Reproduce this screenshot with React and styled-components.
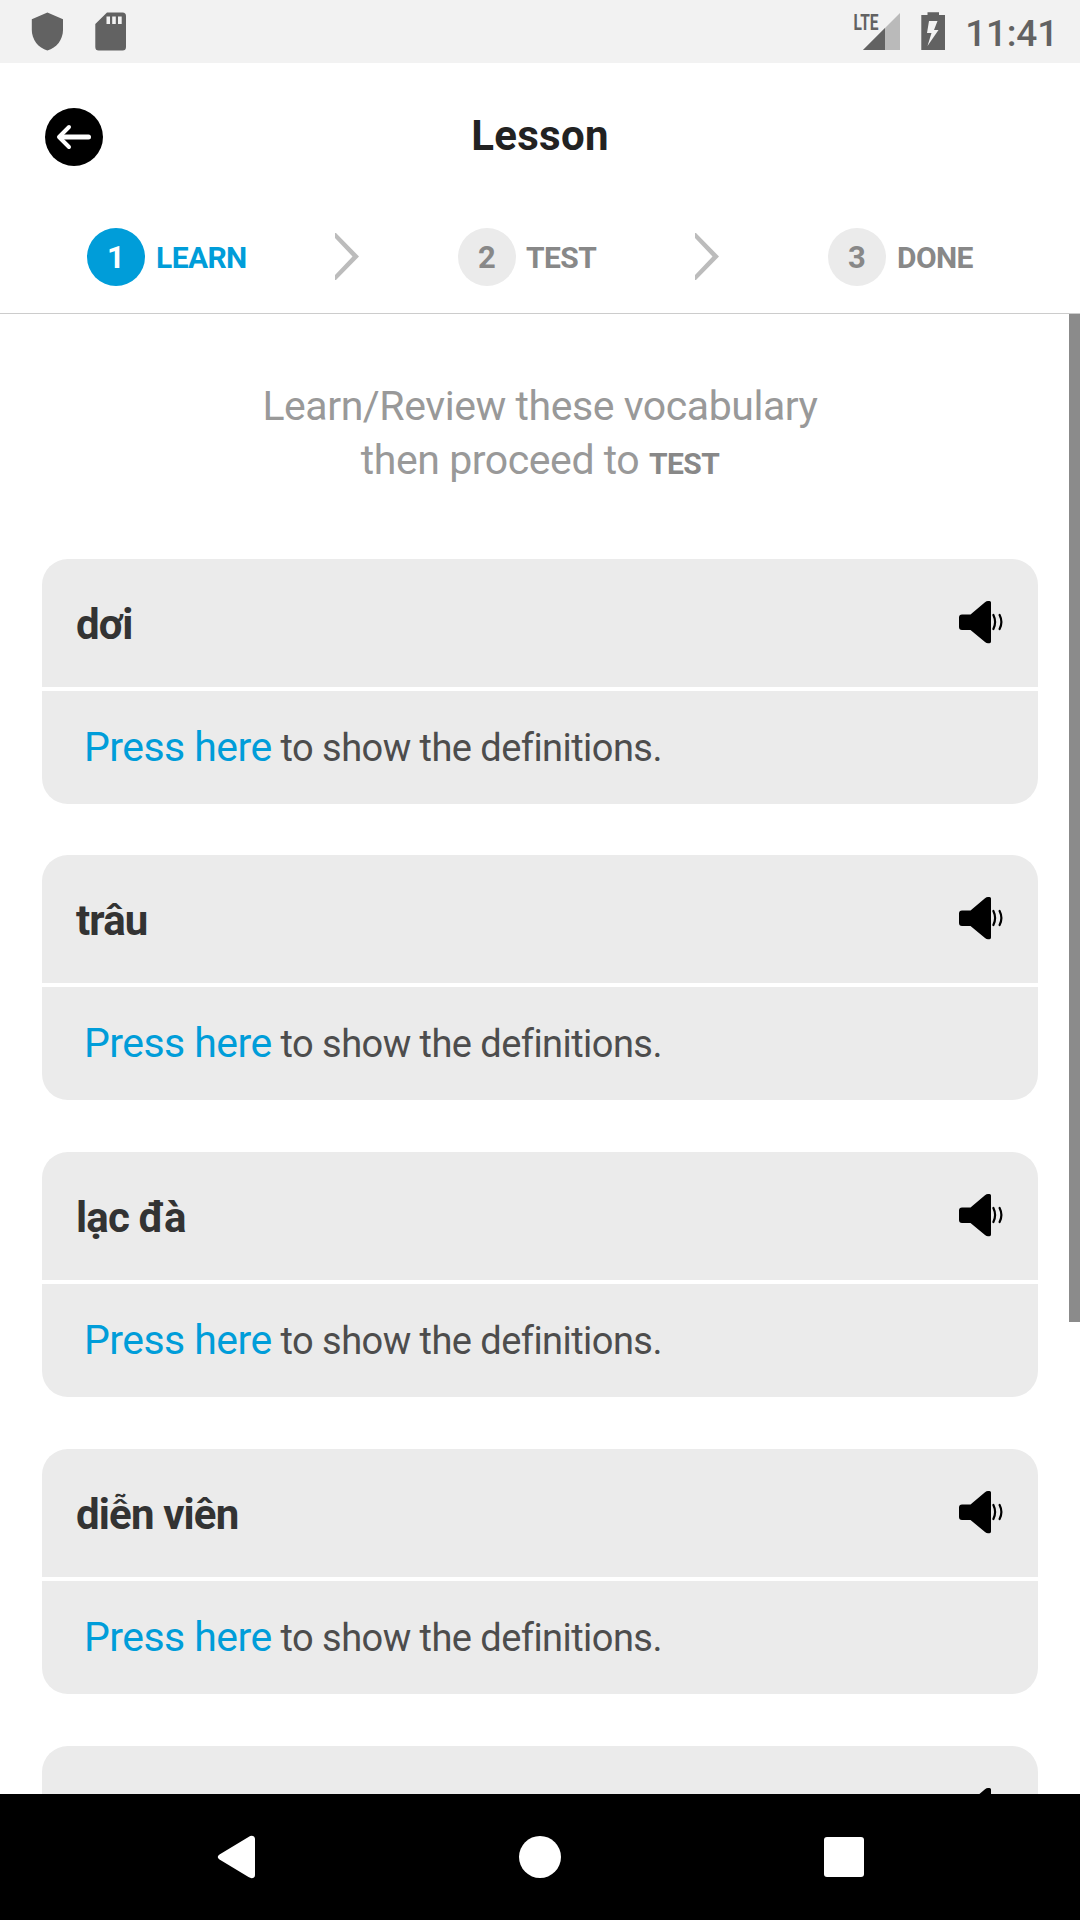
import React from "react";
import styled, { createGlobalStyle } from "styled-components";

const Global = createGlobalStyle`
  * { box-sizing: border-box; }
  body { margin: 0; background: #fff; }
`;

const Screen = styled.div`
  width: 1080px;
  height: 1920px;
  display: flex;
  flex-direction: column;
  overflow: hidden;
  background: #fff;
  font-family: Roboto, "Noto Sans", sans-serif;
`;

const StatusBar = styled.div`
  height: 63px;
  flex: none;
  display: flex;
  align-items: flex-start;
  justify-content: space-between;
  padding: 12px 22px 0 31px;
  background: #f2f2f2;
  color: #626262;
`;

const StatusGroup = styled.div`
  display: flex;
  gap: ${(p) => p.$gap}px;
`;

const Signal = styled.svg`
  overflow: visible;
`;

const Clock = styled.span`
  margin-left: -2px;
  font-size: 37px;
  line-height: 44px;
  font-weight: 500;
  letter-spacing: -0.2px;
`;

const Header = styled.header`
  height: 145px;
  flex: none;
  display: grid;
  grid-template-columns: 58px 1fr 58px;
  align-items: center;
  padding: 3px 45px 0;
`;

const BackButton = styled.button`
  width: 58px;
  height: 58px;
  padding: 0;
  border: 0;
  border-radius: 50%;
  background: #000;
  display: flex;
`;

const Title = styled.h1`
  margin: -2px 0 0;
  text-align: center;
  color: #222;
  font-size: 42px;
  line-height: 50px;
  font-weight: 700;
  letter-spacing: 0.3px;
`;

const Steps = styled.nav`
  height: 106px;
  flex: none;
  display: flex;
  align-items: flex-start;
  padding: 20px 0 0 87px;
  border-bottom: 1px solid #ccc;
`;

const Step = styled.div`
  width: ${(p) => p.$width}px;
  display: flex;
  align-items: center;
  gap: ${(p) => p.$gap || 11}px;
  color: ${(p) => (p.$active ? "#009dd9" : "#888")};
`;

const StepNumber = styled.span`
  width: 58px;
  height: 58px;
  flex: none;
  border-radius: 50%;
  display: flex;
  align-items: center;
  justify-content: center;
  padding-top: 1px;
  font-size: 31px;
  font-weight: 700;
  background: ${(p) => (p.$active ? "#009dd9" : "#ebebeb")};
  color: ${(p) => (p.$active ? "#fff" : "#888")};
`;

const StepLabel = styled.span`
  padding-top: 2px;
  font-size: 30px;
  line-height: 36px;
  font-weight: 700;
  letter-spacing: -0.6px;
`;

const Chevron = styled.svg`
  width: 24px;
  height: 47px;
  flex: none;
  margin: 5px ${(p) => p.$after}px 0 0;
`;

const Scroller = styled.main`
  flex: 1;
  min-height: 0;
  display: flex;
  align-items: flex-start;
  overflow: hidden;
`;

const Content = styled.div`
  width: 1069px;
  padding: 65px 31px 0 42px;
`;

const ScrollThumb = styled.div`
  width: 11px;
  height: 1008px;
  background: #8b8b8b;
`;

const Intro = styled.p`
  margin: 0 0 71.6px;
  text-align: center;
  color: #999;
  font-size: 41px;
  line-height: 54px;
  letter-spacing: -0.44px;
`;

const IntroStrong = styled.strong`
  font-size: 30px;
  line-height: 1;
  letter-spacing: -0.6px;
  color: #888;
`;

const CardList = styled.div`
  display: flex;
  flex-direction: column;
  gap: 51.75px;
`;

const Card = styled.article`
  height: 245px;
  display: flex;
  flex-direction: column;
  gap: 4px;
`;

const CardTop = styled.div`
  height: 128px;
  flex: none;
  display: flex;
  align-items: center;
  justify-content: space-between;
  padding: 3px 34px 0;
  border-radius: 26px 26px 0 0;
  background: #ebebeb;
`;

const Word = styled.h2`
  margin: 0;
  color: #333;
  font-size: 42px;
  line-height: 49px;
  font-weight: 700;
  letter-spacing: -0.85px;
`;

const Sound = styled.svg`
  width: 45px;
  height: 44px;
  margin-top: -5px;
`;

const CardBottom = styled.div`
  flex: 1;
  padding: 31px 42px 0;
  border-radius: 0 0 26px 26px;
  background: #ebebeb;
  color: #4d4d4d;
  font-size: 38px;
  line-height: 50px;
  letter-spacing: -0.55px;
  white-space: nowrap;
`;

const Press = styled.span`
  color: #009dd9;
  font-size: 41px;
`;

const NavBar = styled.footer`
  height: 126px;
  flex: none;
  display: flex;
  align-items: center;
  padding: 0 216px 0 217px;
  justify-content: space-between;
  background: #000;
`;

const words = ["dơi", "trâu", "lạc đà", "diễn viên", ""];

function Speaker() {
  return (
    <Sound viewBox="0 0 45 44">
      <path d="M3 14.5H11.5L26 2.3Q27.5 1 29 1H30.5Q32 1 32 2.5V41.5Q32 43.3 30.5 43.3H29Q27.5 43.3 26 42L11.5 30H3Q0 30 0 27V17.5Q0 14.5 3 14.5Z" />
      <path d="M34.4 15Q37.8 22 34.4 29M40.6 15Q44.2 22 40.6 29" fill="none" stroke="#000" strokeWidth="2.2" strokeLinecap="round" />
    </Sound>
  );
}

export default function App() {
  return (
    <Screen>
      <Global />
      <StatusBar>
        <StatusGroup $gap={31}>
          <svg width="33" height="39" viewBox="0 0 33 39">
            <path fill="#626262" d="M16.4 .5 32 7.3V18C32 27.5 25.5 36 16.4 38.5 7.3 36 .8 27.5 .8 18V7.3Z" />
          </svg>
          <svg width="32" height="39" viewBox="0 0 32 39">
            <path fillRule="evenodd" fill="#626262" d="M12 .5H27.5Q31 .5 31 4V35Q31 38.5 27.5 38.5H3.7Q.3 38.5 .3 35V12ZM11.5 4.5V12H15V4.5ZM17.2 4.5V12H20.8V4.5ZM23 4.5V12H26.7V4.5Z" />
          </svg>
        </StatusGroup>
        <StatusGroup $gap={21}>
          <Signal width="48" height="39" viewBox="0 0 48 39">
            <path fill="#bababa" d="M11 38 48 1V38Z" />
            <path fill="#626262" d="M11 38 33 16V38Z" />
            <text x="1.5" y="18" fontSize="22.5" fontWeight="700" fill="#626262" textLength="25" lengthAdjust="spacingAndGlyphs">LTE</text>
          </Signal>
          <svg width="25" height="39" viewBox="0 0 25 39">
            <path fillRule="evenodd" fill="#626262" d="M6.5 .3H18V3H24V38H.3V3H6.5ZM8 9 6 21H10.5L6.5 34 17.5 18H13L16.5 9Z" />
          </svg>
          <Clock>11:41</Clock>
        </StatusGroup>
      </StatusBar>
      <Header>
        <BackButton aria-label="Back">
          <svg width="58" height="58" viewBox="0 0 58 58" fill="none" stroke="#fff" strokeLinecap="round" strokeLinejoin="round">
            <path strokeWidth="5" d="M16 29H43.5" />
            <path strokeWidth="4" d="M24 19 14 29 24 39" />
          </svg>
        </BackButton>
        <Title>Lesson</Title>
      </Header>
      <Steps>
        <Step $width={248} $active>
          <StepNumber $active>1</StepNumber>
          <StepLabel>LEARN</StepLabel>
        </Step>
        <Chevron $after={99} viewBox="0 0 24 47">
          <path d="M1 0 24 23.5 1 47H0V42L17.5 23.5 0 5V0Z" fill="#bcbcbc" />
        </Chevron>
        <Step $width={237} $gap={10}>
          <StepNumber>2</StepNumber>
          <StepLabel>TEST</StepLabel>
        </Step>
        <Chevron $after={109} viewBox="0 0 24 47">
          <path d="M1 0 24 23.5 1 47H0V42L17.5 23.5 0 5V0Z" fill="#bcbcbc" />
        </Chevron>
        <Step $width={200}>
          <StepNumber>3</StepNumber>
          <StepLabel>DONE</StepLabel>
        </Step>
      </Steps>
      <Scroller>
        <Content>
          <Intro>
            Learn/Review these vocabulary
            <br />
            then proceed to <IntroStrong>TEST</IntroStrong>
          </Intro>
          <CardList>
            {words.map((word, i) => (
              <Card key={i}>
                <CardTop>
                  <Word>{word}</Word>
                  <Speaker />
                </CardTop>
                {word && (
                  <CardBottom>
                    <Press>Press here</Press> to show the definitions.
                  </CardBottom>
                )}
              </Card>
            ))}
          </CardList>
        </Content>
        <ScrollThumb />
      </Scroller>
      <NavBar>
        <svg width="38" height="44" viewBox="0 0 38 44">
          <path fill="#fff" d="M31.5 2Q34.5 0 37 1.5 38 2.5 38 4V40Q38 41.5 37 42.5 34.5 44 31.5 42L2.5 24.5Q-1 22 2.5 19.5Z" />
        </svg>
        <svg width="42" height="42" viewBox="0 0 42 42">
          <circle cx="21" cy="21" r="21" fill="#fff" />
        </svg>
        <svg width="40" height="40" viewBox="0 0 40 40">
          <rect width="40" height="40" rx="3" fill="#fff" />
        </svg>
      </NavBar>
    </Screen>
  );
}
